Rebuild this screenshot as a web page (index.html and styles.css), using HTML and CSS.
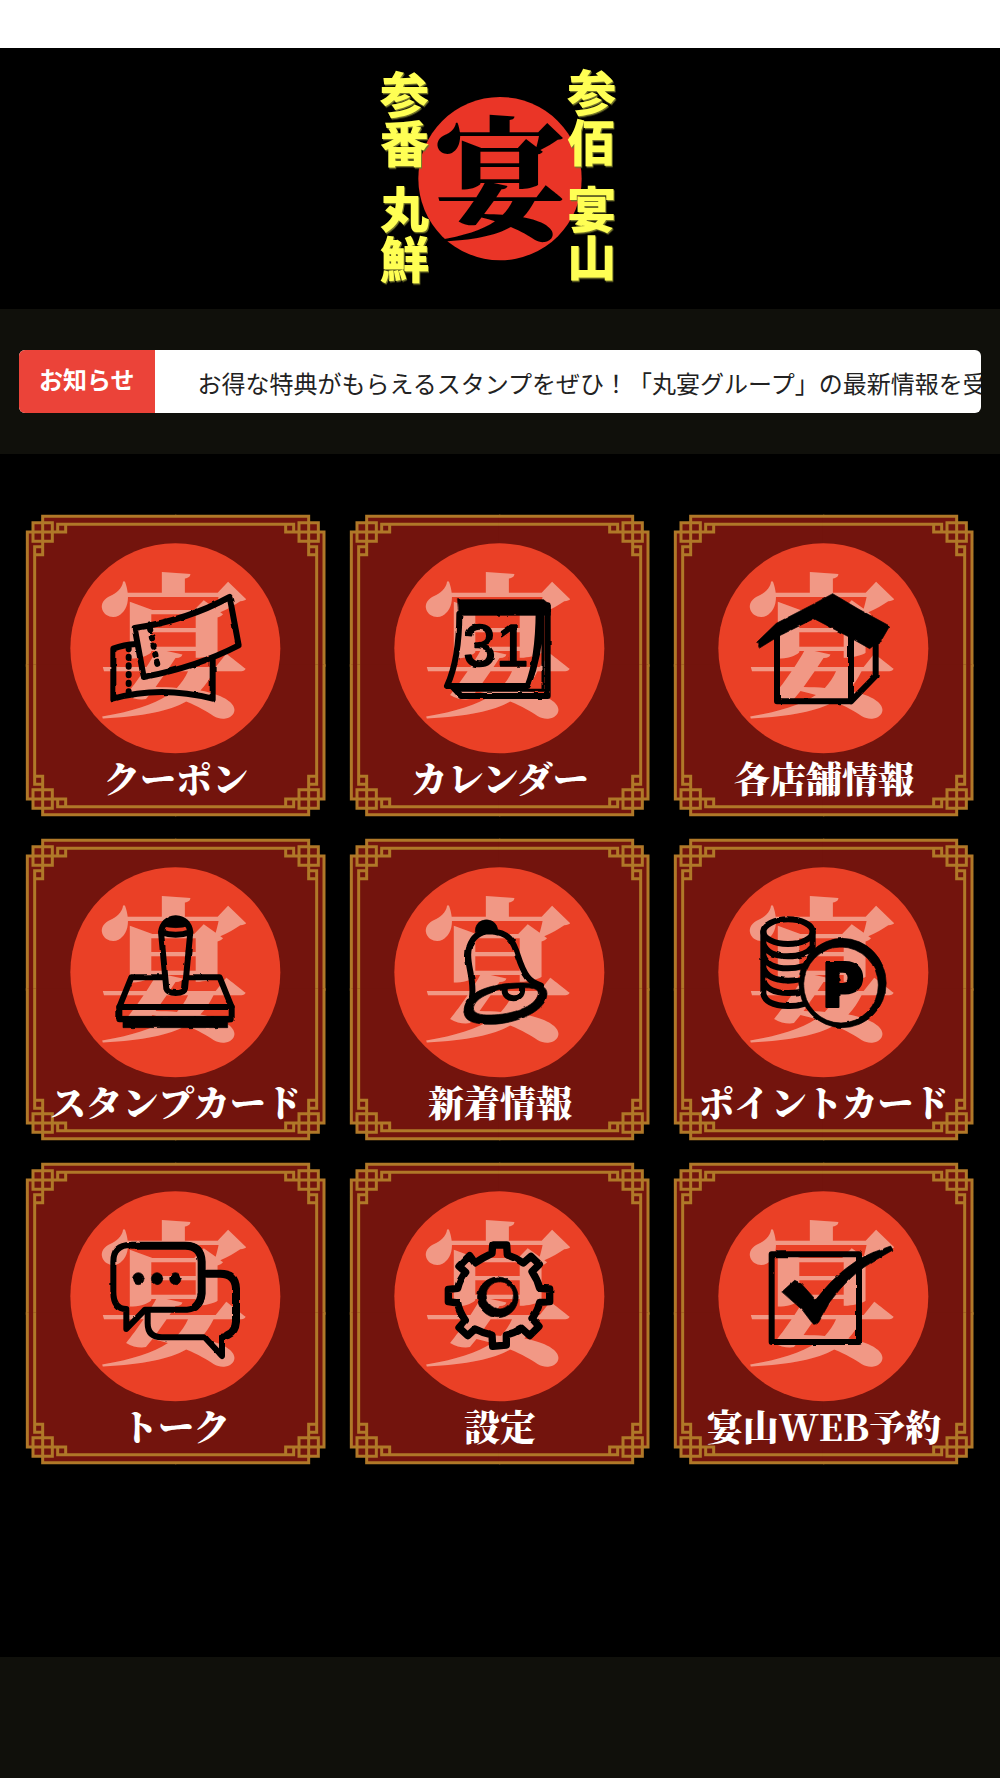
FILE: index.html
```html
<!DOCTYPE html>
<html lang="ja">
<head>
<meta charset="utf-8">
<meta name="viewport" content="width=device-width, initial-scale=1">
<title>丸宴グループ</title>
<link rel="stylesheet" href="styles.css">
</head>
<body>

<!-- shared shapes -->
<svg class="defs" aria-hidden="true">
	<defs>
		<filter id="rough" x="-5%" y="-5%" width="110%" height="110%">
			<feTurbulence type="fractalNoise" baseFrequency="0.04" numOctaves="1" seed="4"/>
			<feDisplacementMap in="SourceGraphic" scale="8" xChannelSelector="R" yChannelSelector="G"/>
		</filter>
		<g id="corner">
			<path class="panel" d="M451 4H50V23H21V51H4V455H451Z"/>
			<path class="gold" d="M451 4H50V119H26V95H50M4 455V51H119V28H95V51M95 28H451M26 95V455M21 23H79V79H21Z"/>
		</g>
		<symbol id="tile" viewBox="0 0 900 900">
			<use href="#corner"/>
			<use href="#corner" transform="translate(898 0) scale(-1 1)"/>
			<use href="#corner" transform="translate(0 903) scale(1 -1)"/>
			<use href="#corner" transform="translate(898 903) scale(-1 -1)"/>
			<circle class="sun" cx="448" cy="400" r="315"/>
			<text class="mark" x="443" y="568">宴</text>
		</symbol>
	</defs>
</svg>

<div class="statusbar"></div>

<header>
	<svg class="logo" viewBox="0 -3 840 780" role="img" aria-label="宴">
		<circle class="logo-sun" cx="420" cy="386" r="245"/>
		<text class="logo-mark" x="420" y="538">宴</text>
		<g class="logo-side">
			<text><tspan x="133" y="188">参</tspan><tspan x="133" y="335">番</tspan><tspan x="133" y="533">丸</tspan><tspan x="133" y="685">鮮</tspan></text>
			<text><tspan x="695" y="184">参</tspan><tspan x="695" y="334">佰</tspan><tspan x="695" y="533">宴</tspan><tspan x="695" y="679">山</tspan></text>
		</g>
	</svg>
</header>

<section class="news">
	<div class="news-bar">
		<div class="news-label">お知らせ</div>
		<div class="news-text">お得な特典がもらえるスタンプをぜひ！「丸宴グループ」の最新情報を受</div>
	</div>
</section>

<main>
	<nav class="menu">
		<a href="#coupon">
			<svg viewBox="0 0 900 900" aria-hidden="true">
				<use href="#tile"/>
				<g class="icon" transform="translate(-17 -29)">
					<path d="M343 368Q500 345 628 275L655 420Q530 485 370 515Z"/>
					<path d="M348 416Q310 418 279 430V580Q420 540 577 580V463"/>
					<path class="dots" d="M389 370L415 496M325 428V560"/>
				</g>
			</svg>
			<span>クーポン</span>
		</a>
		<a href="#calendar">
			<svg viewBox="0 0 900 900" aria-hidden="true">
				<use href="#tile"/>
				<g class="icon" transform="translate(-17 -29)">
					<path class="solid" d="M340 283H598L618 300V330H345Z"/>
					<path d="M345 325Q345 460 308 542H550Q582 460 583 320M610 300V572H350L325 545"/>
					<path class="thin" d="M596 325V550M340 555H600M555 540Q595 440 592 330"/>
					<text class="date" x="455" y="482">31</text>
				</g>
			</svg>
			<span>カレンダー</span>
		</a>
		<a href="#shops">
			<svg viewBox="0 0 900 900" aria-hidden="true">
				<use href="#tile"/>
				<g class="icon" transform="translate(-15 -29)">
					<path class="solid" d="M264 410L322 354L430 298L491 265L570 312L662 362L640 400L602 430L540 395L435 340L330 392L272 428Z"/>
					<path d="M324 390V588H546V395M620 400V512L546 588"/>
				</g>
			</svg>
			<span>各店舗情報</span>
		</a>
		<a href="#stamp">
			<svg viewBox="0 0 900 900" aria-hidden="true">
				<use href="#tile"/>
				<g class="icon" transform="translate(-17 -26)">
					<path d="M430 441H333L297 530V567H634V530L598 441H500"/>
					<path d="M297 530H634"/>
					<path class="solid" d="M292 558H640V572L622 576V592H308V574L292 568Z"/>
					<path d="M422 305L438 475Q442 488 466 488Q492 488 494 475L510 305Q505 268 466 264Q428 268 422 305Q466 322 510 305"/>
					<path class="solid" d="M426 288Q436 260 466 259Q498 260 506 288Q466 296 426 288Z"/>
				</g>
			</svg>
			<span>スタンプカード</span>
		</a>
		<a href="#whatsnew">
			<svg viewBox="0 0 900 900" aria-hidden="true">
				<use href="#tile"/>
				<g class="icon" transform="translate(-17 -26)">
					<path d="M383 500C392 440 360 390 375 350Q390 305 435 303C530 305 505 380 550 440Q560 455 590 466"/>
					<path class="solid" fill-rule="evenodd" d="M359 545C357 480 450 460 520 458C580 456 609 465 608 492C603 550 500 582 440 582C390 582 360 573 359 545ZM387 535C388 500 455 475 525 473C570 471 582 476 582 490C575 530 500 553 440 554C405 555 388 548 387 535Z"/>
					<path class="solid" d="M393 305C390 257 460 257 460 302Z"/>
					<path d="M481 478C478 512 538 514 533 474"/>
				</g>
			</svg>
			<span>新着情報</span>
		</a>
		<a href="#point">
			<svg viewBox="0 0 900 900" aria-hidden="true">
				<use href="#tile"/>
				<g class="icon" transform="translate(-15 -26)">
					<ellipse cx="357" cy="304" rx="74" ry="37"/>
					<path d="M283 304V490Q290 526 357 527Q385 528 405 521M431 304V360M283 340Q295 378 357 378Q410 378 430 350M283 375Q295 414 357 414Q380 414 400 408M283 412Q295 450 357 451Q375 451 392 447M283 450Q295 488 357 488Q375 488 395 485"/>
					<path class="solid" fill-rule="evenodd" d="M521 324A131 134 0 1 1 520 592A131 134 0 1 1 521 324ZM516 350A112 114 0 1 0 516 578A112 114 0 1 0 516 350Z"/>
					<text class="point" x="524" y="530">P</text>
				</g>
			</svg>
			<span>ポイントカード</span>
		</a>
		<a href="#talk">
			<svg viewBox="0 0 900 900" aria-hidden="true">
				<use href="#tile"/>
				<g class="icon" transform="translate(-17 -24)">
					<path d="M382 470V505Q382 547 425 547H553L605 603V545Q645 540 645 500V400Q645 356 600 356H555"/>
					<path class="bold" d="M560 356H600Q645 356 647 400V500Q645 530 622 540"/>
					<path d="M330 270Q279 270 279 320V410Q279 462 318 462V522L374 464H500Q545 460 545 415V320Q543 270 495 270Z"/>
					<path class="bold" d="M335 272H495Q542 272 544 320V415Q542 440 525 455"/>
					<ellipse class="solid" cx="354" cy="371" rx="17" ry="18"/>
					<ellipse class="solid" cx="410" cy="371" rx="17" ry="18"/>
					<ellipse class="solid" cx="465" cy="371" rx="17" ry="18"/>
				</g>
			</svg>
			<span>トーク</span>
		</a>
		<a href="#settings">
			<svg viewBox="0 0 900 900" aria-hidden="true">
				<use href="#tile"/>
				<g class="icon" transform="translate(-17 -24)">
					<path class="gear" d="M443 295L445 270H487L489 300Q515 308 537 324L560 304L585 328L563 350Q580 375 586 400L616 402V440L586 442Q580 470 563 490L584 514L556 542L532 520Q510 535 486 540V570L445 574L443 540Q415 534 392 522L370 542L344 518L363 496Q345 470 340 444L312 440V403L340 400Q346 375 364 352L344 334L376 302L392 324Q415 308 443 295Z"/>
					<path class="solid" fill-rule="evenodd" d="M461 366A61 61 0 1 1 460 488A61 61 0 1 1 461 366ZM466 380A41 41 0 1 0 467 462A41 41 0 1 0 466 380Z"/>
				</g>
			</svg>
			<span>設定</span>
		</a>
		<a href="#reserve">
			<svg viewBox="0 0 900 900" aria-hidden="true">
				<use href="#tile"/>
				<g class="icon" transform="translate(-15 -24)">
					<path d="M308 298H570V561H308Z"/>
					<path class="solid" d="M339 410L377 376L395 384L440 434Q525 326 610 293L665 273L672 285L620 315Q545 355 483 440L450 500Q440 515 428 502L400 465Z"/>
				</g>
			</svg>
			<span>宴山WEB予約</span>
		</a>
	</nav>
</main>

</body>
</html>
```

FILE: styles.css
```css
*{
	box-sizing: border-box;
}

body{
	margin: 0;
	min-height: 100vh;
	background-color: #10100b;
	font-family: "Noto Sans CJK JP", sans-serif;
}

.defs{
	position: absolute;
	width: 0;
	height: 0;
}

.statusbar{
	height: 48px;
	background-color: #fff;
}

header{
	display: flex;
	justify-content: center;
	background-color: #000;
}

.logo{
	width: 280px;
	height: 260px;
	margin-top: 1px;
}

.logo text{
	text-anchor: middle;
}

.logo-sun{
	fill: #ea3527;
}

.logo-mark{
	font-family: "Noto Serif CJK JP", serif;
	font-size: 400px;
	font-weight: 900;
}

.logo-side{
	font-size: 148px;
	font-weight: 900;
	fill: #ffff54;
	filter: drop-shadow(3px 4px 1px #77772a);
}

/* news ticker */
.news{
	padding: 41px 19px;
}

.news-bar{
	display: flex;
	height: 63px;
	border-radius: 6px;
	overflow: hidden;
	background-color: #fff;
	font-size: 24px;
	white-space: nowrap;
}

.news-label{
	flex: none;
	padding: 0 20px;
	line-height: 58px;
	background-color: #eb4339;
	color: #fff;
	font-weight: 700;
}

.news-text{
	flex: 1;
	padding-left: 43px;
	line-height: 66px;
	color: #222;
	overflow: hidden;
}

/* menu tiles */
main{
	background-color: #000;
	padding: 61px 26px 194px;
}

.menu{
	display: grid;
	grid-template-columns: repeat(3, 1fr);
	gap: 24px;
}

.menu a{
	display: grid;
	color: #fff;
	text-decoration: none;
}

.menu svg, .menu span{
	grid-area: 1 / 1;
}

.menu svg{
	display: block;
	width: 100%;
	overflow: visible;
}

.menu span{
	align-self: end;
	margin-bottom: 17px;
	text-align: center;
	white-space: nowrap;
	font-family: "Noto Serif CJK JP", "Noto Sans CJK JP", serif;
	font-size: 36px;
	font-weight: 900;
	line-height: 40px;
}

#tile{
	overflow: visible;
}

.panel{
	fill: #73140d;
}

.gold{
	fill: none;
	stroke: #b07828;
	stroke-width: 9;
}

.sun{
	fill: #ea4026;
}

.mark{
	fill: #f19885;
	font-family: "Noto Serif CJK JP", serif;
	font-size: 460px;
	font-weight: 900;
	text-anchor: middle;
}

.icon{
	fill: none;
	stroke: #000;
	stroke-width: 18;
	stroke-linejoin: round;
	stroke-linecap: round;
	filter: url(#rough);
}

.icon .solid{
	fill: #000;
	stroke-width: 2;
}

.icon .thin{
	stroke-width: 9;
}

.icon .bold{
	stroke-width: 24;
}

.icon .gear{
	stroke-width: 22;
}

.icon .dots{
	stroke-dasharray: 4 22;
}

.icon text{
	fill: #000;
	stroke: none;
	text-anchor: middle;
}

.icon .date{
	font-family: "Liberation Sans Narrow", "Liberation Sans", sans-serif;
	font-size: 176px;
	stroke: #000;
	stroke-width: 5;
}

.icon .point{
	font-family: Inter, sans-serif;
	font-size: 184px;
	font-weight: 900;
	stroke: #000;
	stroke-width: 6;
}
```
